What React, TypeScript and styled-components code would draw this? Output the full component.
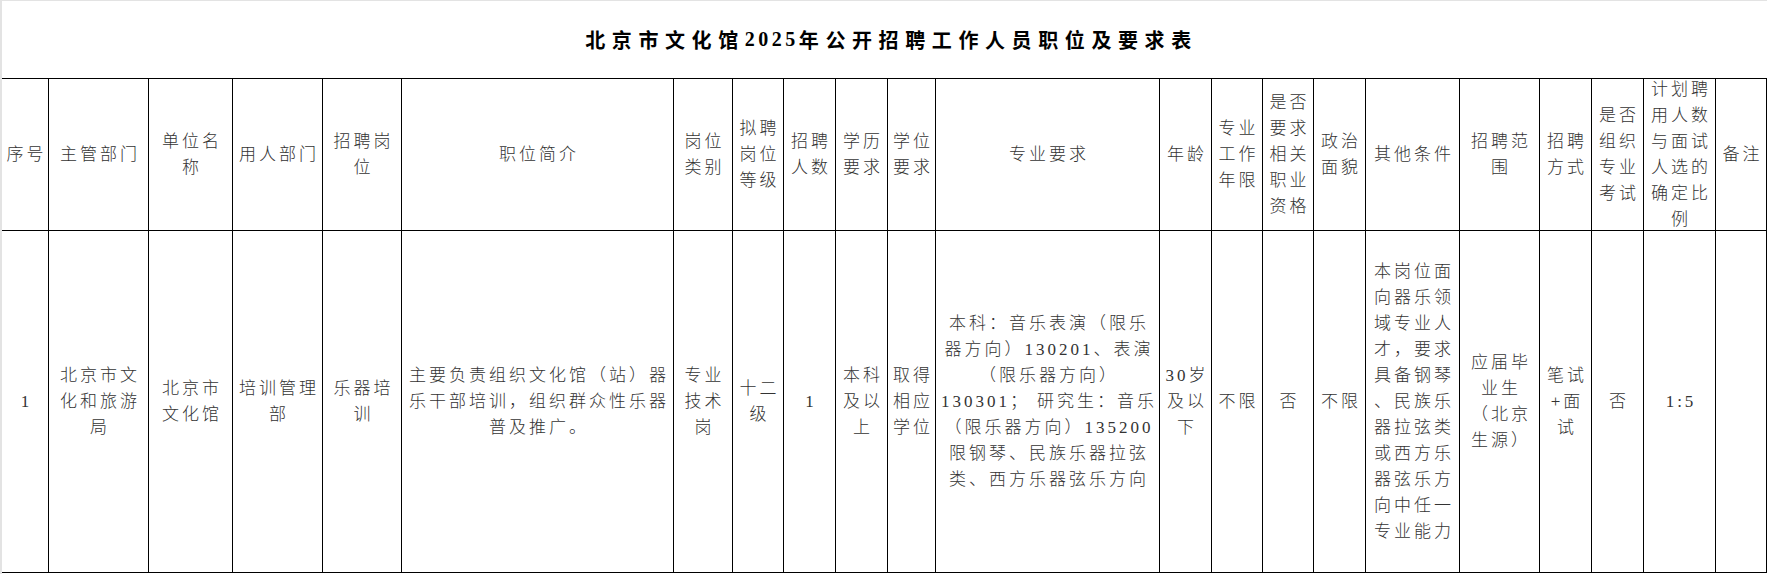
import React from "react";
import styled, { createGlobalStyle } from "styled-components";

const GlobalStyle = createGlobalStyle`
  html, body {
    margin: 0;
    padding: 0;
    background: #fff;
  }
  body {
    font-family: "Liberation Serif", "Noto Sans CJK SC", serif;
  }
`;

// column widths, each one includes its right border line
const COLS = [47, 100, 84, 90, 79, 272, 59, 51, 52, 52, 48, 224, 52, 51, 51, 52, 94, 80, 52, 52, 72, 51];

const HEADERS: string[][] = [
  ["序号"],
  ["主管部门"],
  ["单位名", "称"],
  ["用人部门"],
  ["招聘岗", "位"],
  ["职位简介"],
  ["岗位", "类别"],
  ["拟聘", "岗位", "等级"],
  ["招聘", "人数"],
  ["学历", "要求"],
  ["学位", "要求"],
  ["专业要求"],
  ["年龄"],
  ["专业", "工作", "年限"],
  ["是否", "要求", "相关", "职业", "资格"],
  ["政治", "面貌"],
  ["其他条件"],
  ["招聘范", "围"],
  ["招聘", "方式"],
  ["是否", "组织", "专业", "考试"],
  ["计划聘", "用人数", "与面试", "人选的", "确定比", "例"],
  ["备注"],
];

const ROW: string[][] = [
  ["1"],
  ["北京市文", "化和旅游", "局"],
  ["北京市", "文化馆"],
  ["培训管理", "部"],
  ["乐器培", "训"],
  ["主要负责组织文化馆（站）器", "乐干部培训，组织群众性乐器", "普及推广。"],
  ["专业", "技术", "岗"],
  ["十二", "级"],
  ["1"],
  ["本科", "及以", "上"],
  ["取得", "相应", "学位"],
  [
    "本科：音乐表演（限乐",
    "器方向）130201、表演",
    "（限乐器方向）",
    "130301； 研究生：音乐",
    "（限乐器方向）135200",
    "限钢琴、民族乐器拉弦",
    "类、西方乐器弦乐方向",
  ],
  ["30岁", "及以", "下"],
  ["不限"],
  ["否"],
  ["不限"],
  [
    "本岗位面",
    "向器乐领",
    "域专业人",
    "才，要求",
    "具备钢琴",
    "、民族乐",
    "器拉弦类",
    "或西方乐",
    "器弦乐方",
    "向中任一",
    "专业能力",
  ],
  ["应届毕", "业生", "（北京", "生源）"],
  ["笔试", "+面", "试"],
  ["否"],
  ["1:5"],
  [],
];

const Page = styled.div`
  width: 1767px;
  height: 574px;
  box-sizing: border-box;
  border-top: 1px solid #e3e3e3;
  border-left: 2px solid #e3e3e3;
  overflow: hidden;
  background: #fff;
`;

const Title = styled.h1`
  margin: 0;
  height: 77px;
  display: flex;
  align-items: center;
  justify-content: center;
  padding-left: 14px;
  font-size: 20px;
  font-weight: 700;
  letter-spacing: 6.6px;
  color: #000;
`;

const Year = styled.span`
  letter-spacing: 3.5px;
`;

const Sheet = styled.div<{ $cols: number[] }>`
  display: grid;
  grid-template-columns: ${(p) => p.$cols.map((w) => `${w}px`).join(" ")};
  grid-template-rows: 152px 342px;
  border-top: 1px solid #000;
`;

const Cell = styled.div`
  box-sizing: border-box;
  min-width: 0;
  border-right: 1px solid #000;
  border-bottom: 1px solid #000;
  display: flex;
  flex-direction: column;
  align-items: center;
  justify-content: center;
  padding-left: 3px;
  font-size: 17px;
  line-height: 26px;
  letter-spacing: 3px;
  font-weight: 300;
  color: #333;
  white-space: nowrap;
  text-align: center;
`;

const Line = styled.span`
  display: block;
`;

function Lines({ lines }: { lines: string[] }) {
  return (
    <>
      {lines.map((l, i) => (
        <Line key={i}>{l}</Line>
      ))}
    </>
  );
}

export default function App() {
  return (
    <>
      <GlobalStyle />
      <Page>
        <Title>
          北京市文化馆<Year>2025</Year>年公开招聘工作人员职位及要求表
        </Title>
        <Sheet $cols={COLS}>
          {HEADERS.map((h, i) => (
            <Cell key={"h" + i}>
              <Lines lines={h} />
            </Cell>
          ))}
          {ROW.map((r, i) => (
            <Cell key={"d" + i}>
              <Lines lines={r} />
            </Cell>
          ))}
        </Sheet>
      </Page>
    </>
  );
}
